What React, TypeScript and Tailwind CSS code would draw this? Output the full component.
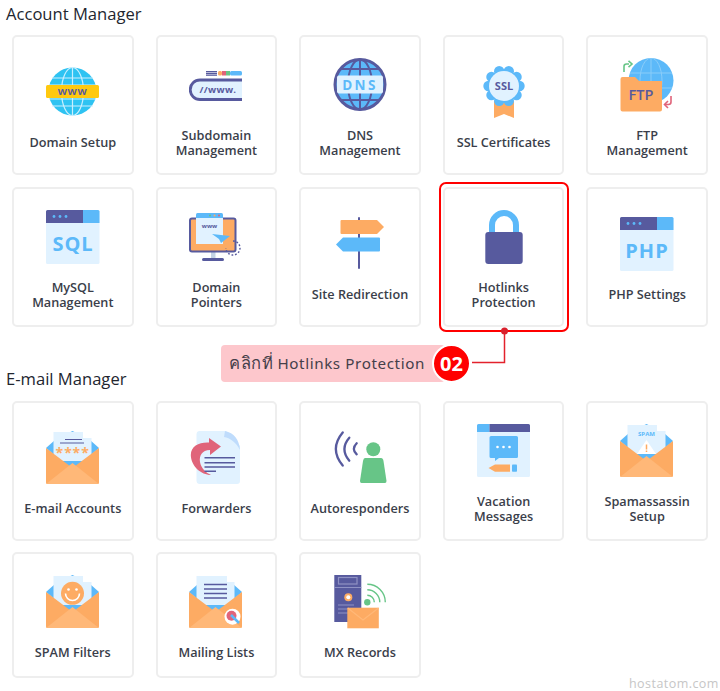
import type { ReactNode } from "react";

const NAVY = "#575a9e";
const BLUE = "#5cb9f9";
const LIGHT = "#e1f2ff";
const ORANGE = "#fdab63";
const ORANGE_LIGHT = "#ffb878";
const GREEN = "#67c587";
const PINK = "#e0647a";

const Icon = ({ children }: { children: ReactNode }) => (
  <svg viewBox="0 0 54 54" className="block h-[54px] w-[54px] shrink-0">
    {children}
  </svg>
);

const IconText = ({
  x = 27,
  y,
  size,
  fill,
  spacing = 0,
  weight = 700,
  children,
}: {
  x?: number;
  y: number;
  size: number;
  fill: string;
  spacing?: number;
  weight?: number;
  children: string;
}) => (
  <text
    x={x}
    y={y}
    fontSize={size}
    fill={fill}
    fontWeight={weight}
    letterSpacing={spacing}
    textAnchor="middle"
    fontFamily="'Open Sans', sans-serif"
  >
    {children}
  </text>
);

const WindowIcon = ({ label }: { label: string }) => (
  <Icon>
    <rect x="0" y="0" width="53.5" height="54" rx="1.5" fill={LIGHT} />
    <path d="M0 13V1.5A1.5 1.5 0 0 1 1.5 0H37V13Z" fill={NAVY} />
    <path d="M37 0H52A1.5 1.5 0 0 1 53.5 1.5V13H37Z" fill={BLUE} />
    <circle cx="8" cy="6.5" r="1.4" fill={BLUE} />
    <circle cx="14" cy="6.5" r="1.4" fill={BLUE} />
    <circle cx="20" cy="6.5" r="1.4" fill={BLUE} />
    <IconText y={41} size={20} fill={BLUE} spacing={1}>
      {label}
    </IconText>
  </Icon>
);

const EnvelopeBody = () => (
  <>
    <path
      d="M0 17 26.5 37 53 17V51.5A1.5 1.5 0 0 1 51.5 53H1.5A1.5 1.5 0 0 1 0 51.5Z"
      fill={ORANGE}
    />
    <path d="M0 53 26.5 32 53 53Z" fill={ORANGE_LIGHT} />
  </>
);

const EnvelopeIcon = ({ children }: { children?: ReactNode }) => (
  <Icon>
    <path d="M0 17 9 9H44L53 17 27 40Z" fill={BLUE} />
    <path d="M7.5 1H37V7H45.5V30H7.5Z" fill={LIGHT} />
    <path d="M24.5 1 26.5 0 28.5 1Z" fill={BLUE} />
    {children}
    <EnvelopeBody />
  </Icon>
);

const DomainIcon = () => (
  <Icon>
    <circle cx="26.5" cy="26.5" r="24" fill="#2ec3f2" />
    <g stroke="#c9efff" strokeWidth="1.2" fill="none">
      <ellipse cx="26.5" cy="26.5" rx="11" ry="24" />
      <path d="M26.5 2.5V50.5M6 13H47M3 20H50M3 34H50M6 41H47" />
    </g>
    <rect x="0" y="20" width="53" height="13" rx="1.5" fill="#ffc90f" />
    <IconText x={26.5} y={30} size={9.5} fill={NAVY} spacing={0.6}>
      WWW
    </IconText>
  </Icon>
);

const SubdomainIcon = () => (
  <Icon>
    <rect x="17" y="13" width="11" height="1.4" fill={NAVY} />
    <rect x="17" y="15" width="11" height="1.2" fill={NAVY} />
    <rect x="17" y="16.6" width="11" height="1.2" fill={NAVY} />
    <rect x="29" y="13" width="4" height="4.5" rx="1.5" fill={ORANGE} />
    <rect x="33" y="13" width="4" height="4.5" fill={PINK} />
    <rect x="37" y="13" width="4" height="4.5" fill={GREEN} />
    <rect x="41" y="13" width="12" height="4.5" rx="1.5" fill={BLUE} />
    <path d="M53 23H11A8.5 8.5 0 0 0 11 40H53Z" fill={LIGHT} />
    <path d="M53 22H11A9.7 9.7 0 0 0 11 41.5H53" fill="none" stroke={NAVY} strokeWidth="2.8" />
    <IconText x={29} y={35} size={9.5} fill={NAVY} spacing={0.3}>
      //www.
    </IconText>
  </Icon>
);

const DnsIcon = () => (
  <Icon>
    <circle cx="27" cy="26.5" r="25" fill={BLUE} stroke={NAVY} strokeWidth="3" />
    <g stroke={NAVY} strokeWidth="2" fill="none">
      <ellipse cx="27" cy="26.5" rx="12" ry="25" />
      <path d="M27 1.5V51.5M7 11H47M7 42H47" />
    </g>
    <rect x="4" y="17.5" width="46" height="18" rx="2" fill={LIGHT} />
    <IconText y={31.5} size={13.5} fill={BLUE} spacing={2.4}>
      DNS
    </IconText>
  </Icon>
);

const SslIcon = () => (
  <Icon>
    <path d="M17 36H37V53L27 49 17 53Z" fill={ORANGE} />
    {Array.from({ length: 10 }).map((_, i) => {
      const a = (i / 10) * Math.PI * 2;
      return <circle key={i} cx={27 + 15.5 * Math.cos(a)} cy={21 + 15.5 * Math.sin(a)} r="5.2" fill={BLUE} />;
    })}
    <circle cx="27" cy="21" r="16" fill={BLUE} />
    <circle cx="27" cy="21" r="15" fill={LIGHT} />
    <IconText y={25} size={11} fill={NAVY}>
      SSL
    </IconText>
  </Icon>
);

const FtpIcon = () => (
  <Icon>
    <circle cx="31" cy="22.5" r="22.5" fill={BLUE} />
    <g stroke="#8acdf9" strokeWidth="1" fill="none">
      <ellipse cx="31" cy="22.5" rx="11" ry="22.5" />
      <path d="M31 0V45M10 15H52M10 30H52" />
    </g>
    <path
      d="M0.5 21A2 2 0 0 1 2.5 19H15L19 23H42V51.5A2 2 0 0 1 40 53.5H2.5A2 2 0 0 1 0.5 51.5Z"
      fill={ORANGE}
    />
    <IconText x={21} y={42} size={14.5} fill={NAVY} weight={600}>
      FTP
    </IconText>
    <path d="M4 14V8.5A2.5 2.5 0 0 1 6.5 6H9" fill="none" stroke={GREEN} strokeWidth="1.6" />
    <path d="M8.5 2.8 12 6 8.5 9.2" fill="none" stroke={GREEN} strokeWidth="1.6" />
    <path d="M51 38V44A2.5 2.5 0 0 1 48.5 46.5H45" fill="none" stroke={PINK} strokeWidth="1.6" />
    <path d="M48 43 44.5 46.5 48 50" fill="none" stroke={PINK} strokeWidth="1.6" />
  </Icon>
);

const PointersIcon = () => (
  <Icon>
    <rect x="22" y="42" width="4.5" height="6" fill="#c4d3e4" />
    <rect x="13" y="48" width="22" height="3" rx="1.5" fill={NAVY} />
    <rect x="1" y="8.5" width="45.5" height="33" rx="2" fill={ORANGE} stroke={NAVY} strokeWidth="2" />
    <path
      d="M44 31A7 7 0 1 1 37 38"
      fill="none"
      stroke={NAVY}
      strokeWidth="1.4"
      strokeDasharray="1.8 1.8"
    />
    <rect x="7" y="8" width="27" height="26" fill={LIGHT} />
    <path d="M7 8V4.5A1.5 1.5 0 0 1 8.5 3H32.5A1.5 1.5 0 0 1 34 4.5V8Z" fill={BLUE} />
    <circle cx="21" cy="5.5" r="1" fill={GREEN} />
    <circle cx="25.5" cy="5.5" r="1" fill={ORANGE} />
    <circle cx="30" cy="5.5" r="1" fill={PINK} />
    <IconText x={20.5} y={17.5} size={6} fill={NAVY}>
      www
    </IconText>
    <path d="M23 24 41 26 32 33 30 29Z" fill={BLUE} />
  </Icon>
);

const RedirectIcon = () => (
  <Icon>
    <rect x="25" y="0" width="2" height="52" rx="1" fill={NAVY} />
    <path d="M8.5 3H44L51 10 44 17H8.5A1 1 0 0 1 7.5 16V4A1 1 0 0 1 8.5 3Z" fill={ORANGE} />
    <path d="M46 20.5H10L3 27.5 10 34.5H46A1 1 0 0 0 47 33.5V21.5A1 1 0 0 0 46 20.5Z" fill={BLUE} />
  </Icon>
);

const LockIcon = () => (
  <Icon>
    <path d="M15 24V15A12 12 0 0 1 39 15V24" fill="none" stroke={BLUE} strokeWidth="6" />
    <rect x="8.3" y="22" width="37.4" height="32" rx="3" fill={NAVY} />
  </Icon>
);

const ForwardersIcon = () => (
  <Icon>
    <path d="M10 0H37L51 15V50A3 3 0 0 1 48 53H10A3 3 0 0 1 7.5 50V3A3 3 0 0 1 10 0Z" fill={LIGHT} />
    <path d="M36 0C45 2 50 8 51 19 47 11 41 7 35 6Z" fill="#bfdcfc" />
    <path d="M20 7 32 15.5 21 24V19C13 19 10 25 11 31 12 37 17 42 22 44 12 44 2 35 1.8 24 2 15 10 11 20 11.5Z" fill={PINK} />
    <path d="M15.5 26.7H46M15.5 31.7H46M15.5 36H46M15.5 40.3H27" stroke={NAVY} strokeWidth="1.4" />
  </Icon>
);

const AutoresponderIcon = () => (
  <Icon>
    <g fill="none" stroke={NAVY} strokeWidth="2.3" strokeLinecap="round">
      <path d="M9.7 1.5Q-4 18 9.7 34.5" />
      <path d="M16.3 6.7Q6.5 18 16.3 29.7" />
      <path d="M23.7 12.3Q18 18 23.7 23.3" />
    </g>
    <circle cx="40.3" cy="18.3" r="7" fill={GREEN} />
    <path d="M32 27H48Q50 27 50.5 30L53.5 50Q53.5 52 52 52H28.5Q27 52 27 50L30 30Q30.5 27 32 27Z" fill={GREEN} />
  </Icon>
);

const VacationIcon = () => (
  <Icon>
    <rect x="0" y="0" width="53" height="53" rx="1.5" fill={LIGHT} />
    <path d="M0 8V1.5A1.5 1.5 0 0 1 1.5 0H12.5V8Z" fill={BLUE} />
    <path d="M12.5 0H51.5A1.5 1.5 0 0 1 53 1.5V8H12.5Z" fill={NAVY} />
    <path d="M14 12H39.5A1.5 1.5 0 0 1 41 13.5V32.5A1.5 1.5 0 0 1 39.5 34H22L18 37V34H14A1.5 1.5 0 0 1 12.5 32.5V13.5A1.5 1.5 0 0 1 14 12Z" fill={BLUE} />
    <circle cx="20.5" cy="23" r="1.3" fill="#fff" />
    <circle cx="26.5" cy="23" r="1.3" fill="#fff" />
    <circle cx="32.5" cy="23" r="1.3" fill="#fff" />
    <path d="M11.5 44 18 40.5H33V47.7H18Z" fill={ORANGE} />
    <rect x="35" y="40.5" width="5" height="7.2" rx="0.8" fill={BLUE} />
  </Icon>
);

const MailingIcon = () => (
  <Icon>
    <path d="M0 17 9 9H44L53 17 27 40Z" fill={BLUE} />
    <path d="M7.5 1H38V7H45.5V30H7.5Z" fill={LIGHT} />
    <path d="M15 9.5H38M15 14H38M15 18.5H38M15 23H38" stroke={NAVY} strokeWidth="1.3" />
    <EnvelopeBody />
    <circle cx="43.5" cy="41.7" r="8" fill="#fff" />
    <circle cx="42.5" cy="40.7" r="5" fill={PINK} />
    <path d="M42 40 50 48" stroke={BLUE} strokeWidth="2.5" />
  </Icon>
);

const MxIcon = () => (
  <Icon>
    <rect x="1.3" y="0" width="27" height="47" fill={NAVY} />
    <rect x="5.5" y="2.5" width="18.5" height="6.5" fill="none" stroke="#8f92c4" strokeWidth="1.2" />
    <path d="M1.3 12.5H28.3M5 30H21M5 34H15M5 38H15" stroke="#8f92c4" strokeWidth="1.1" />
    <circle cx="15.3" cy="22.3" r="4" fill={ORANGE} />
    <circle cx="15.3" cy="22.3" r="2" fill="#fff" />
    <circle cx="34.3" cy="27.3" r="3.2" fill={GREEN} />
    <g fill="none" stroke={GREEN} strokeWidth="1.4">
      <path d="M34.3 20.3A7 7 0 0 1 41.3 27.3" />
      <path d="M34.3 14.8A12.5 12.5 0 0 1 46.8 27.3" />
      <path d="M34.3 9.3A18 18 0 0 1 52.3 27.3" />
    </g>
    <rect x="14.3" y="32.7" width="31.5" height="20.6" fill={ORANGE} />
    <path d="M14.8 33 30 45 45.5 33" fill="none" stroke={ORANGE_LIGHT} strokeWidth="1.2" />
  </Icon>
);

const Star = ({ x }: { x: number }) => (
  <IconText x={x} y={27} size={14} fill={ORANGE}>
    *
  </IconText>
);

const accountItems = [
  { label: "Domain Setup", icon: <DomainIcon /> },
  { label: "Subdomain\nManagement", icon: <SubdomainIcon /> },
  { label: "DNS\nManagement", icon: <DnsIcon /> },
  { label: "SSL Certificates", icon: <SslIcon /> },
  { label: "FTP\nManagement", icon: <FtpIcon /> },
  { label: "MySQL\nManagement", icon: <WindowIcon label="SQL" /> },
  { label: "Domain\nPointers", icon: <PointersIcon /> },
  { label: "Site Redirection", icon: <RedirectIcon /> },
  { label: "Hotlinks\nProtection", icon: <LockIcon /> },
  { label: "PHP Settings", icon: <WindowIcon label="PHP" /> },
];

const emailItems = [
  {
    label: "E-mail Accounts",
    icon: (
      <EnvelopeIcon>
        <path d="M19 8.5H36M14 12H38" stroke={NAVY} strokeWidth="1.2" />
        <Star x={13.3} />
        <Star x={22} />
        <Star x={30.3} />
        <Star x={39} />
      </EnvelopeIcon>
    ),
  },
  { label: "Forwarders", icon: <ForwardersIcon /> },
  { label: "Autoresponders", icon: <AutoresponderIcon /> },
  { label: "Vacation\nMessages", icon: <VacationIcon /> },
  {
    label: "Spamassassin\nSetup",
    icon: (
      <EnvelopeIcon>
        <IconText x={26.5} y={12} size={6} fill={BLUE}>
          SPAM
        </IconText>
        <path d="M26.5 16 36 30H17Z" fill="#fff" />
        <path d="M26.5 20.5V25.5M26.5 26.5V28" stroke={ORANGE} strokeWidth="1.5" />
      </EnvelopeIcon>
    ),
  },
  {
    label: "SPAM Filters",
    icon: (
      <EnvelopeIcon>
        <circle cx="26.5" cy="18.3" r="11.5" fill={ORANGE} />
        <circle cx="22.5" cy="14.5" r="1.3" fill="#fff" />
        <circle cx="30.5" cy="14.5" r="1.3" fill="#fff" />
        <path d="M19.5 18.5A7 7 0 0 0 33.5 18.5" fill="none" stroke="#fff" strokeWidth="1.6" />
      </EnvelopeIcon>
    ),
  },
  { label: "Mailing Lists", icon: <MailingIcon /> },
  { label: "MX Records", icon: <MxIcon /> },
];

type CardItem = { label: string; icon: ReactNode };

function Card({ label, icon }: CardItem) {
  return (
    <div className="flex flex-col items-center justify-center rounded-[5px] border-2 border-[#eeeeee] bg-white pt-[6px]">
      {icon}
      <p className="mt-[16px] whitespace-pre-line text-center text-[12.7px] leading-[15.5px] font-semibold text-[#3a3e4a]">
        {label}
      </p>
    </div>
  );
}

export default function App() {
  return (
    <div className="relative h-[691px] w-[720px] overflow-hidden bg-white font-['Open_Sans',sans-serif]">
      <h2 className="h-[28px] pl-[6px] text-[16.6px] leading-[28px] font-medium text-[#22262f]">Account Manager</h2>
      <div className="mt-[7px] grid grid-cols-5 grid-rows-[140px_140px] gap-x-[22px] gap-y-[12px] px-[12px]">
        {accountItems.map((item) => (
          <Card key={item.label} {...item} />
        ))}
      </div>

      <h2 className="mt-[38px] h-[28px] pl-[6px] text-[16.6px] leading-[28px] font-medium text-[#22262f]">E-mail Manager</h2>
      <div className="mt-[8px] grid grid-cols-5 grid-rows-[140px_126px] gap-x-[22px] gap-y-[11px] px-[12px]">
        {emailItems.map((item) => (
          <Card key={item.label} {...item} />
        ))}
      </div>

      {/* callout over the Hotlinks card */}
      <div className="absolute top-[182px] left-[439px] h-[150px] w-[130px] rounded-[7px] border-2 border-[#ff0000]" />
      <svg className="absolute top-[325px] left-[465px] h-[45px] w-[50px]" viewBox="0 0 50 45">
        <path d="M39.5 6V37.5H7" fill="none" stroke="#e3222c" strokeWidth="1.5" />
        <circle cx="39.5" cy="6" r="3.5" fill="#d9202c" />
      </svg>
      <div className="absolute top-[345px] left-[221px] flex h-[37px] w-[224px] items-center rounded-[4px] bg-[#fdc7cc] pl-[8px] font-['Noto_Sans','DejaVu_Sans',sans-serif] text-[15.2px] tracking-[0.6px] whitespace-nowrap text-[#45404a]">
        <span className="mr-[4px] text-[16.5px]">คลิกที่</span>
        <span>Hotlinks Protection</span>
      </div>
      <div className="absolute top-[344px] left-[432px] flex h-[39px] w-[39px] items-center justify-center rounded-full border-2 border-white bg-[#ff0000] text-[20px] font-bold text-white">
        02
      </div>

      <span className="absolute top-[675px] left-[629px] text-[12.5px] leading-[18px] tracking-[0.45px] text-[#c6c6c6]">
        hostatom.com
      </span>
    </div>
  );
}
